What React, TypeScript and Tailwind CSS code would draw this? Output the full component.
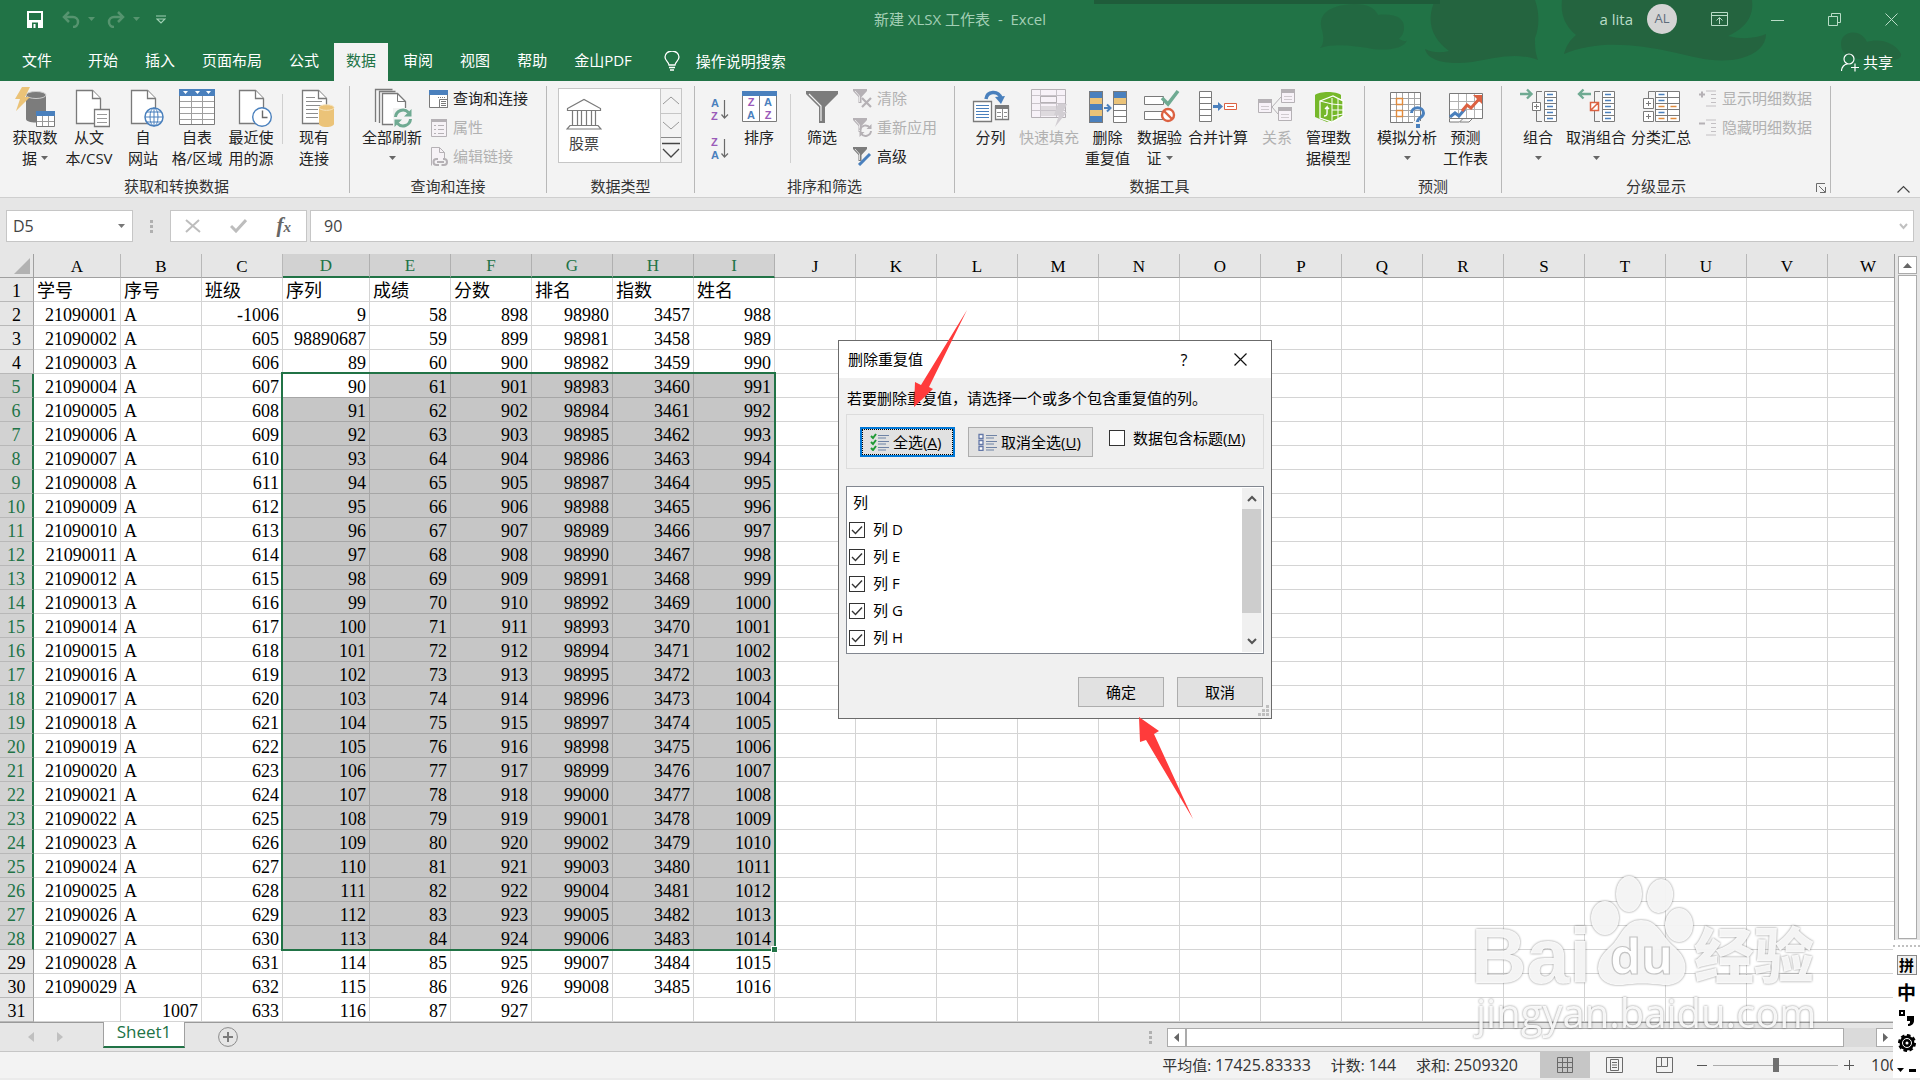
import React from 'react';

const UI_FONT = "font-['Open_Sans','Noto_Sans_CJK_SC',sans-serif]";
const CELL_FONT = "font-['Liberation_Serif','Noto_Sans_CJK_SC',serif]";

const GRAY = '#7a7a7a';
const BLUE = '#4a80bd';
const SAND = '#ebc378';
const GREEN = '#6faa92';
const PURPLE = '#9a5ab8';
const MUTED = '#b5b1b5';
const RED = '#dc6141';

/* ---------- icons ---------- */

type SvgProps = { w?: number; h?: number; children: React.ReactNode };

const Svg: React.FC<SvgProps> = ({ w = 42, h = 42, children }) => (
  <svg width={w} height={h} viewBox={`0 0 ${w} ${h}`} fill="none" className="block shrink-0" aria-hidden="true">
    {children}
  </svg>
);

const Page: React.FC<{ x?: number; y?: number }> = ({ x = 9, y = 4 }) => (
  <g stroke={GRAY} strokeWidth="1.3" fill="#fff">
    <path d={`M${x + 0.5} ${y + 0.5}h16l8 8v25h-24z`} />
    <path d={`M${x + 16.5} ${y + 0.5}v8h8`} />
  </g>
);

const GetDataIcon = () => (
  <Svg>
    <path d="M12 9v24c0 2 4 3.500 10 3.500s10-1.500 10-3.500V9z" fill="#7c7c7c" />
    <ellipse cx="22" cy="9" rx="10" ry="3.500" fill="#7c7c7c" stroke="#cfcfcf" />
    <path d="M8 1h8l-5 10h5L2 25l4-12H1z" fill={SAND} />
    <path d="M22.500 26.500h18v14h-18z" fill="#fff" stroke={GRAY} />
    <path d="M22 25h19v5H22z" fill={BLUE} />
    <path d="M23 35.500h17M28.500 30v10M34.500 30v10" stroke="#9a9a9a" />
  </Svg>
);

const CsvIcon = () => (
  <Svg>
    <Page x={8} />
    <path d="M26.500 23.500h15v17h-15z" fill="#fff" stroke={GRAY} strokeWidth="1.300" />
    <path d="M29 28.500h10M29 32.500h10M29 36.500h10" stroke="#9a9a9a" />
  </Svg>
);

const WebIcon = () => (
  <Svg>
    <Page />
    <circle cx="32" cy="31" r="9" fill="#fff" stroke={BLUE} strokeWidth="1.500" />
    <ellipse cx="32" cy="31" rx="4" ry="9" stroke={BLUE} />
    <path d="M32 22v18M23 31h18M25 26h14M25 36h14" stroke={BLUE} />
  </Svg>
);

const TableIcon = () => (
  <Svg>
    <path d="M3.500 8.500h35v30h-35z" fill="#fff" stroke={GRAY} />
    <path d="M3 3h36v7H3z" fill={BLUE} />
    <path d="M7 5h5l-2.500 3zM19 5h5l-2.500 3zM30 5h5l-2.500 3z" fill="#fff" />
    <path d="M4 15.500h34M4 21.500h34M4 27.500h34M4 33.500h34M15.500 10v28M26.500 10v28" stroke="#9f9f9f" />
  </Svg>
);

const RecentIcon = () => (
  <Svg>
    <Page />
    <circle cx="32" cy="31" r="9.300" fill="#fff" stroke={BLUE} strokeWidth="1.400" />
    <path d="M32.500 24.500v7h5" stroke="#6a6a6a" strokeWidth="1.400" />
  </Svg>
);

const ExistingIcon = () => (
  <Svg>
    <Page />
    <path d="M13 11.500h9M13 15.500h16M13 19.500h16M13 23.500h12M13 27.500h12M13 31.500h12" stroke="#8d8d8d" />
    <path d="M26 21v17c0 1.500 3 3 7.500 3s7.500-1.500 7.500-3V21z" fill={SAND} />
    <ellipse cx="33.500" cy="21.500" rx="7.500" ry="2.800" fill={SAND} stroke="#f6e3bd" />
  </Svg>
);

const RefreshArrows: React.FC<{ x: number; y: number; color: string }> = ({ x, y, color }) => (
  <g transform={`translate(${x} ${y})`}>
    <path d="M1.500 8a7.500 7.500 0 0 1 13-4.500M16.500 10a7.500 7.500 0 0 1-13 4.500" stroke={color} strokeWidth="3" />
    <path d="M17.500 0v7.500h-7.500zM.500 18v-7.500H8z" fill={color} />
  </g>
);

const RefreshAllIcon = () => (
  <Svg>
    <path d="M4.500 36V3.500h17M8.500 37V5.500h16" stroke={GRAY} strokeWidth="1.300" />
    <path d="M11.500 7.500h15l8 8v23h-23z" fill="#fff" stroke={GRAY} strokeWidth="1.300" />
    <path d="M26.500 7.500v8h8" stroke={GRAY} />
    <path d="M22 22h19v20H22z" fill="#f3f3f3" />
    <RefreshArrows x={23} y={23} color={GREEN} />
  </Svg>
);

const QueriesIcon = () => (
  <Svg w={19} h={18}>
    <path d="M.500 1.500h18v16H.500z" fill="#fff" stroke={GRAY} />
    <path d="M0 0h19v5H0z" fill={BLUE} />
    <path d="M9 7.500h8" stroke={GRAY} strokeDasharray="1 1" />
    <path d="M10.500 9.500h8v8h-8zM12 11.500h5M12 13.500h5M12 15.500h5" stroke={GRAY} />
  </Svg>
);

const PropsIcon = () => (
  <Svg w={19} h={18}>
    <path d="M2.500.500h15v17h-15z" fill="#f6f2f6" stroke={MUTED} />
    <path d="M2 0h16v3H2z" fill={MUTED} />
    <path d="M5 6.500h2M5 10.500h2M5 14.500h2M9 6.500h6M9 10.500h6M9 14.500h6" stroke={MUTED} />
  </Svg>
);

const LinksIcon = () => (
  <Svg w={19} h={20}>
    <path d="M2.500 18.500V.500h8l5 5v6" stroke={MUTED} fill="#f6f2f6" />
    <path d="M10.500.500v5h5" stroke={MUTED} />
    <path d="M9 12h-1.500a3 3 0 0 0 0 6H10M14 12h1a3 3 0 0 1 0 6h-2.500M8 15h7" stroke={MUTED} strokeWidth="2" />
  </Svg>
);

const BankIcon = () => (
  <Svg w={36} h={32}>
    <path d="M1.500 10.500L18 1.500l16.500 9v2h-33zM6.500 13v14M11.500 13v14M15.500 13v14M20.500 13v14M25.500 13v14M29.500 13v14M4 27.500h28l3 3.500H1z" stroke={GRAY} strokeWidth="1.200" />
  </Svg>
);

const SortPairIcon: React.FC<{ top: string; bottom: string; topColor: string; bottomColor: string }> = ({
  top,
  bottom,
  topColor,
  bottomColor,
}) => (
  <Svg w={18} h={26}>
    <g fontSize="11" fontWeight="700" fontFamily="Liberation Sans, sans-serif">
      <text x="0" y="10" fill={topColor}>{top}</text>
      <text x="0" y="23" fill={bottomColor}>{bottom}</text>
    </g>
    <path d="M13.500 3v18M10.500 17.500l3 3.500 3.500-3.500" stroke="#6a6a6a" strokeWidth="1.200" />
  </Svg>
);

const SortIcon = () => (
  <Svg>
    <path d="M4.500 6.500h34v29h-34z" fill="#fff" stroke={GRAY} />
    <path d="M4 5h35v5H4z" fill={BLUE} />
    <path d="M21.500 10v25" stroke={GRAY} />
    <g fontSize="11" fontWeight="700" fontFamily="Liberation Sans, sans-serif" textAnchor="middle">
      <text x="13" y="20" fill={PURPLE}>Z</text>
      <text x="13" y="33" fill={BLUE}>A</text>
      <text x="30" y="20" fill={BLUE}>A</text>
      <text x="30" y="33" fill={PURPLE}>Z</text>
    </g>
  </Svg>
);

const FilterIcon = () => (
  <Svg>
    <path d="M5 5h32v3L24 21v16h-6V21L5 8z" fill="#7c7c7c" />
    <path d="M8 8l12 12v15" stroke="#f3f3f3" strokeWidth="1.200" />
  </Svg>
);

const SmallFunnel: React.FC<{ color: string; children?: React.ReactNode }> = ({ color, children }) => (
  <Svg w={19} h={19}>
    <path d="M0 0h14v2L8.500 8v6h-3V8L0 2z" fill={color} />
    <path d="M2 2l4.500 5v6" stroke="#f3f3f3" strokeWidth=".8" />
    {children}
  </Svg>
);

const TextToColumnsIcon = () => (
  <Svg>
    <path d="M3.500 15.500h18v20h-18zM25.500 20.500h13v13h-13z" fill="#fff" stroke={GRAY} strokeWidth="1.300" />
    <path d="M25 19h14v4H25z" fill={GRAY} />
    <path d="M6 19.500h13M6 22.500h13M6 25.500h13M6 28.500h13M6 31.500h13" stroke={BLUE} />
    <path d="M27 26.500h4M34 26.500h3M27 30.500h4M34 30.500h3M32.500 23v10" stroke="#8d8d8d" />
    <path d="M16 13c1-8 12-9 15-1" stroke={BLUE} strokeWidth="3.500" />
    <path d="M25 11l6 7 4-8z" fill={BLUE} />
  </Svg>
);

const FlashFillIcon = () => (
  <Svg>
    <path d="M3.500 3.500h34v28h-34z" fill="#f7f2f8" stroke={MUTED} />
    <path d="M12 20h20v10H12z" fill="#dedade" />
    <path d="M4 9.500h33M4 17.500h33M4 24.500h33M12.500 4v27M28.500 4v27" stroke="#c9c4ca" />
    <path d="M12.500 10.500h16v6h-16z" stroke={MUTED} />
    <path d="M30 18h9l-4 8h4L27 41l4-12h-5z" fill="#d2ced3" />
  </Svg>
);

const RemoveDuplicatesIcon = () => (
  <Svg>
    <path d="M2 5h14v32H2zM26 5h14v32H26z" fill="#fff" />
    <path d="M2 5h14v7H2zM2 18h14v6H2zM2 30h14v7H2zM26 5h14v7H26z" fill={BLUE} />
    <path d="M2 12h14v6H2zM2 24h14v6H2zM26 12h14v6H26z" fill={SAND} />
    <path d="M2.500 5.500h13v31h-13zM26.500 5.500h13v31h-13zM26 18.500h14M26 24.500h14M26 30.500h14" stroke={GRAY} />
    <path d="M17 22h5M20 18.500l3.500 3.500-3.500 3.500" stroke={BLUE} strokeWidth="2" />
  </Svg>
);

const ValidationIcon = () => (
  <Svg>
    <path d="M5.500 10.500h19v8h-19zM5.500 25.500h19v8h-19z" fill="#fff" stroke={GRAY} />
    <path d="M23 12l6 6L39 5" stroke={GREEN} strokeWidth="3.500" />
    <circle cx="29" cy="29" r="6" stroke={RED} strokeWidth="2.400" fill="#fff" />
    <path d="M25 25l8 8" stroke={RED} strokeWidth="2.400" />
  </Svg>
);

const ConsolidateIcon = () => (
  <Svg>
    <path d="M2.500 5.500h12v30h-12zM2.500 11.500h12M2.500 17.500h12M2.500 23.500h12M2.500 29.500h12" fill="#fff" stroke={GRAY} />
    <path d="M16 19h5v-3l5 4.500-5 4.500v-3h-5z" fill={BLUE} />
    <path d="M27.500 17.500h12v6h-12zM30 20.500h7" fill="#fff" stroke={RED} />
  </Svg>
);

const RelationsIcon = () => (
  <Svg>
    <path d="M16 21l9-10M16 21l6 7" stroke={MUTED} />
    <path d="M2.500 13.500h13v13h-13zM25.500 4.500h13v12h-13zM22.500 22.500h13v12h-13z" fill="#f7f2f8" stroke={MUTED} />
    <path d="M2 13h14v4H2zM25 3h14v4H25zM22 21h14v4H22z" fill={MUTED} />
    <path d="M5 20.500h8M5 23.500h8M28 10.500h8M28 13.500h8M25 28.500h8M25 31.500h8" stroke="#cfcacf" />
  </Svg>
);

const DataModelIcon = () => (
  <Svg>
    <path d="M7 9c4-4 22-4 26 0v22l-14 5-12-5z" fill="#76b82a" />
    <path d="M12 15l13-5 10 5v15l-11 6-12-4z" fill="#76b82a" stroke="#fff" strokeWidth="1.300" />
    <path d="M24 12v23M30 13v20M24 18l11 1M24 24h11M24 30l11-2M12 15l12 3" stroke="#fff" />
    <path d="M16 30c4 0 3-2 3-9l-2 2m2-2l2 2" stroke="#fff" strokeWidth="1.400" />
  </Svg>
);

const WhatIfIcon = () => (
  <Svg>
    <path d="M4.500 6.500h30v30h-30z" fill="#fff" stroke={GRAY} />
    <path d="M5 12.500h29M5 18.500h29M5 24.500h29M5 30.500h29M10.500 7v29M16.500 7v29M22.500 7v29M28.500 7v29" stroke="#a6a6a6" />
    <path d="M10.500 12.500h6v6h-6zM10.500 24.500h6v6h-6z" fill="#fff" stroke="#e08a3c" strokeWidth="1.400" />
    <path d="M27 35h9v6h-9z" fill="#f3f3f3" />
    <path d="M25.500 27c0-7 12-7 12 0 0 5-6 4-6 9" stroke={BLUE} strokeWidth="3" />
    <path d="M30 38h4v4h-4z" fill={BLUE} />
  </Svg>
);

const ForecastIcon = () => (
  <Svg>
    <path d="M4.500 7.500h33v25h-33z" fill="#fff" stroke={GRAY} />
    <path d="M5 15.500h32M5 23.500h32M13.500 8v24M21.500 8v24M29.500 8v24" stroke="#b2b2b2" />
    <path d="M4.500 33v3h10l3-3M15 36h9l3-3" stroke={GRAY} fill="#fff" />
    <path d="M5 31l5-4 4 3 6-7" stroke={BLUE} strokeWidth="3" />
    <path d="M17 25l5-6 4 3 9-10" stroke={RED} strokeWidth="3" />
    <path d="M28 9h9v9z" fill={RED} />
  </Svg>
);

const OutlineRows: React.FC<{ x: number }> = ({ x }) => (
  <g>
    <path d={`M${x + 0.5} 5.500h12v30h-12zM${x} 11.500h13M${x} 17.500h13M${x} 23.500h13M${x} 29.500h13`} fill="#fff" stroke={GRAY} />
    <path d={`M${x + 3} 8.500h6M${x + 3} 14.500h6M${x + 3} 20.500h6M${x + 3} 26.500h6M${x + 3} 32.500h6`} stroke={BLUE} strokeWidth="1.400" />
  </g>
);

const GroupIcon = () => (
  <Svg>
    <path d="M3 8h11M10 3.500L14.500 8 10 12.500" stroke={GREEN} strokeWidth="2.400" />
    <path d="M25 5.500h-5.500v30H25" stroke={GRAY} />
    <path d="M15.500 16.500h8v8h-8zM17 20.500h5M19.500 18v5" stroke={GRAY} fill="#fff" />
    <OutlineRows x={27} />
  </Svg>
);

const UngroupIcon = () => (
  <Svg>
    <path d="M16 8H4M8.500 3.500L4 8l4.500 4.500" stroke={GREEN} strokeWidth="2.400" />
    <path d="M25 5.500h-5.500v30H25" stroke={GRAY} />
    <path d="M15.500 16.500h8v8h-8zM16 24l7-7" stroke={RED} strokeWidth="1.500" fill="#fff" />
    <OutlineRows x={27} />
  </Svg>
);

const SubtotalIcon = () => (
  <Svg>
    <path d="M15.500 5.500h24v30h-24zM15 11.500h25M15 17.500h25M15 23.500h25M15 29.500h25M27.500 5v31" fill="#fff" stroke={GRAY} />
    <path d="M18.500 8.500h6M18.500 14.500h6M18.500 26.500h6" stroke={BLUE} strokeWidth="1.400" />
    <path d="M18.500 20.500h6M30.500 20.500h6M18.500 32.500h6M30.500 32.500h6" stroke="#e08a3c" strokeWidth="1.400" />
    <path d="M15 5.500H8.500V12" stroke={GRAY} />
    <path d="M3.500 12.500h10v10h-10zM3.500 25.500h10v10h-10zM6 17.500h5M8.500 15v5M6 30.500h5M8.500 28v5" stroke={GRAY} fill="#fff" />
  </Svg>
);

const DetailIcon: React.FC<{ plus?: boolean }> = ({ plus }) => (
  <Svg w={18} h={17}>
    <path d="M0 4.500h6" stroke={MUTED} strokeWidth="2" />
    {plus && <path d="M3 1.500v6" stroke={MUTED} strokeWidth="2" />}
    <path d="M7 1h10M12 4.500h5M12 8.500h5M12 12.500h5M7 16h10" stroke="#c3c0c3" />
  </Svg>
);

const Caret: React.FC<{ className?: string }> = ({ className = '' }) => (
  <svg width="7" height="4" viewBox="0 0 7 4" className={`inline-block ${className}`} aria-hidden="true">
    <path d="M0 0h7L3.500 4z" fill="currentColor" />
  </svg>
);

/* ---------- title bar and tabs ---------- */

const TitleArt = () => (
  <svg className="pointer-events-none absolute right-0 top-0" width="620" height="81" viewBox="0 0 620 81" aria-hidden="true">
    <g fill="#24643f">
      <path d="M20 48C24 44 24 38 22 30 18 16 26 8 44 5c16-3 30 0 34 10 18-2 26 4 26 12 0 6-2 9-5 12 4 2 7 3 8 1-2 8-18 11-34 9-18-3-38-6-53-1z" opacity=".7" />
      <path d="M125 49c8 4 16 4 24 2-16-12-24-28-14-51h100c5 14 4 28 0 38 0 8 0 14 3 22-22-8-42-2-66 2-22 3-44 0-47-13z" />
      <path d="M264 54c2-8 6-14 12-19-10-8-16-20-14-35h190c2 16-6 28-24 36 16 4 28 2 38-2 0 12-10 20-24 24-24 6-44 0-70-6-36-8-76-12-108 2z" />
      <path d="M541 44c0-14 20-16 26-2 12-4 28 0 34 12 2 8-20 8-34 6-18-2-26-6-26-16z" opacity=".8" />
    </g>
  </svg>
);

const TitleBar = () => (
  <header className="relative bg-[#217346] text-[15px] text-white">
    <TitleArt />
    <div className="absolute left-[57%] top-0 h-1 w-[18%] bg-[#1f5c3a]" />
    <div className="relative grid h-[43px] grid-cols-3 items-center pb-[5px]">
      <div className="flex items-center pl-[27px]">
        <button type="button" aria-label="保存">
          <Svg w={16} h={17}>
            <path d="M1 1h14v15H1z" stroke="#fff" strokeWidth="2" />
            <path d="M2 9h12v7H2z" fill="#fff" />
            <path d="M5 11.500h6V17H5z" fill="#217346" />
            <path d="M6.500 13h2v4h-2z" fill="#fff" />
          </Svg>
        </button>
        <button type="button" aria-label="撤消" className="ml-[19px] flex items-center gap-2 text-[#56946f]">
          <Svg w={18} h={17}>
            <path d="M3 6h8a5 5 0 0 1 0 10" stroke="#56946f" strokeWidth="2.500" />
            <path d="M7 1L2 6l5 5" stroke="#56946f" strokeWidth="2.500" />
          </Svg>
          <Caret />
        </button>
        <button type="button" aria-label="恢复" className="ml-3 flex items-center gap-2 text-[#56946f]">
          <Svg w={18} h={17}>
            <path d="M15 6H7a5 5 0 0 0 0 10" stroke="#56946f" strokeWidth="2.500" />
            <path d="M11 1l5 5-5 5" stroke="#56946f" strokeWidth="2.500" />
          </Svg>
          <Caret />
        </button>
        <button type="button" aria-label="自定义快速访问工具栏" className="ml-4">
          <Svg w={10} h={9}>
            <path d="M0 1h10M1 4l4 4 4-4z" stroke="#9fd0b3" strokeWidth="1.200" />
          </Svg>
        </button>
      </div>
      <h1 className="whitespace-pre text-center text-[#a3cfb5]">新建 XLSX 工作表  -  Excel</h1>
      <div className="flex items-center justify-end pr-[22px] text-[#b9dcc7]">
        <span>a lita</span>
        <span className="ml-[14px] flex h-[30px] w-[30px] items-center justify-center rounded-full bg-[#d4d4d4] text-[13px] text-[#5c6b7a]">
          AL
        </span>
        <button type="button" aria-label="功能区显示选项" className="ml-[34px]">
          <Svg w={17} h={14}>
            <path d="M.500.500h16v13H.500zM.500 3.500h16M8.500 12V6M5.500 8.500l3-3 3 3" stroke="#b9dcc7" />
          </Svg>
        </button>
        <button type="button" aria-label="最小化" className="ml-[43px]">
          <Svg w={13} h={13}><path d="M0 7.500h13" stroke="#b9dcc7" /></Svg>
        </button>
        <button type="button" aria-label="向下还原" className="ml-[44px]">
          <Svg w={14} h={13}>
            <path d="M.500 3.500h9v9h-9zM3.500 3V.500h9v9H10" stroke="#b9dcc7" />
          </Svg>
        </button>
        <button type="button" aria-label="关闭" className="ml-[43px]">
          <Svg w={13} h={13}><path d="M.500.500l12 12M12.500.500l-12 12" stroke="#b9dcc7" /></Svg>
        </button>
      </div>
    </div>
    <nav className="relative flex h-[38px] items-stretch gap-[3px]">
      <a href="#file" className="flex items-center pb-[3px] pl-[22px] pr-[21px]">文件</a>
      {TABS.map((tab) => (
        <a
          key={tab}
          href={`#${tab}`}
          className={`flex items-center px-3 pb-[3px] ${tab === '数据' ? 'bg-[#f3f3f3] text-[#217346]' : ''}`}
        >
          {tab}
        </a>
      ))}
      <button type="button" className="ml-[17px] flex items-center gap-4 pb-[2px]">
        <Svg w={16} h={20}>
          <path d="M5 14c0-3-4-4-4-8a7 6 0 0 1 14 0c0 4-4 5-4 8zM5 16.500h6M6 19h4" stroke="#fff" strokeWidth="1.300" />
        </Svg>
        操作说明搜索
      </button>
      <button type="button" className="ml-auto flex items-center gap-1 pr-[27px]">
        <Svg w={18} h={19}>
          <circle cx="8" cy="6" r="5" stroke="#fff" strokeWidth="1.200" />
          <path d="M.500 18c0-4 3-7 6-7M10 14.500h8M14 10.500v8" stroke="#fff" strokeWidth="1.200" />
        </Svg>
        共享
      </button>
    </nav>
  </header>
);

const TABS = ['开始', '插入', '页面布局', '公式', '数据', '审阅', '视图', '帮助', '金山PDF'];

/* ---------- ribbon ---------- */

type BigButtonProps = {
  icon: React.ReactNode;
  lines: string[];
  width: string;
  caret?: boolean;
  disabled?: boolean;
};

const BigButton: React.FC<BigButtonProps> = ({ icon, lines, width, caret, disabled }) => (
  <button
    type="button"
    disabled={disabled}
    className={`flex shrink-0 flex-col items-center whitespace-nowrap leading-[19px] ${width} ${disabled ? 'text-[#b1b1b1]' : ''}`}
  >
    {icon}
    <span className="h-5">{lines[0]}</span>
    <span className="flex h-5 items-center">
      {lines[1]}
      {caret && <Caret className={`text-[#666] ${lines[1] ? 'ml-1' : ''}`} />}
    </span>
  </button>
);

const SmallButton: React.FC<{ icon: React.ReactNode; label: string; disabled?: boolean }> = ({ icon, label, disabled }) => (
  <button
    type="button"
    disabled={disabled}
    className={`flex h-[29px] items-center gap-[5px] whitespace-nowrap pb-1 ${disabled ? 'text-[#b1b1b1]' : ''}`}
  >
    {icon}
    {label}
  </button>
);

type GroupProps = { label: string; width: string; children: React.ReactNode; launcher?: boolean };

const RibbonGroup: React.FC<GroupProps> = ({ label, width, children, launcher }) => (
  <section className={`relative mb-1 mt-[5px] flex shrink-0 flex-col border-r border-[#b8b8b8] ${width}`}>
    <div className="flex flex-1">{children}</div>
    <h2 className={`-mb-[3px] text-center leading-[19px] text-[#333] ${launcher ? 'pr-5' : ''}`}>{label}</h2>
    {launcher && (
      <button type="button" aria-label="分级显示设置" className="absolute bottom-0 right-1">
        <Svg w={10} h={10}>
          <path d="M.500 9V.500H9M3 3l6 6M9.500 4v5.500H4" stroke="#6a6a6a" />
        </Svg>
      </button>
    )}
  </section>
);

const Divider: React.FC<{ className: string }> = ({ className }) => (
  <div className={`mt-2 w-px shrink-0 bg-[#d0d0d0] ${className}`} />
);

const Ribbon = () => (
  <div className="flex h-[117px] border-b border-[#cfcfcf] bg-[#f3f3f3] text-[15px] text-[#222]">
    <RibbonGroup label="获取和转换数据" width="w-[350px] pr-1 pl-2">
      <BigButton icon={<GetDataIcon />} lines={['获取数', '据']} caret width="w-[54px]" />
      <BigButton icon={<CsvIcon />} lines={['从文', '本/CSV']} width="w-[54px]" />
      <BigButton icon={<WebIcon />} lines={['自', '网站']} width="w-[54px]" />
      <BigButton icon={<TableIcon />} lines={['自表', '格/区域']} width="w-[54px]" />
      <BigButton icon={<RecentIcon />} lines={['最近使', '用的源']} width="w-[54px]" />
      <Divider className="mx-1 h-[50px]" />
      <BigButton icon={<ExistingIcon />} lines={['现有', '连接']} width="w-[54px]" />
    </RibbonGroup>
    <RibbonGroup label="查询和连接" width="w-[197px]">
      <BigButton icon={<RefreshAllIcon />} lines={['全部刷新']} caret width="ml-2 w-[68px]" />
      <div className="ml-[3px]">
        <SmallButton icon={<QueriesIcon />} label="查询和连接" />
        <SmallButton icon={<PropsIcon />} label="属性" disabled />
        <SmallButton icon={<LinksIcon />} label="编辑链接" disabled />
      </div>
    </RibbonGroup>
    <RibbonGroup label="数据类型" width="w-[148px]">
      <div className="ml-[11px] mt-[2px] flex h-[75px] w-[124px] border border-[#c6c6c6] bg-white">
        <button type="button" className="flex flex-1 flex-col items-start pl-[7px] pt-[9px] text-[#444]">
          <BankIcon />
          <span className="ml-[3px] mt-1 leading-[19px]">股票</span>
        </button>
        <div className="flex w-[21px] flex-col border-l border-[#c6c6c6] bg-[#f3f3f3]">
          <button type="button" aria-label="上一行" className="flex flex-1 items-center justify-center border-b border-[#c6c6c6]">
            <Svg w={18} h={9}><path d="M1 8l8-7 8 7" stroke="#999" /></Svg>
          </button>
          <button type="button" aria-label="下一行" className="flex flex-1 items-center justify-center border-b border-[#8a8a8a]">
            <Svg w={18} h={9}><path d="M1 1l8 7 8-7" stroke="#999" /></Svg>
          </button>
          <button type="button" aria-label="其他" className="flex flex-1 items-center justify-center">
            <Svg w={18} h={18}><path d="M0 2.500h18M1 8l8 8 8-8" stroke="#444" strokeWidth="1.300" /></Svg>
          </button>
        </div>
      </div>
    </RibbonGroup>
    <RibbonGroup label="排序和筛选" width="w-[260px]">
      <div className="ml-4 flex w-6 flex-col gap-[13px] pt-[11px]">
        <button type="button" aria-label="升序">
          <SortPairIcon top="A" bottom="Z" topColor={BLUE} bottomColor={PURPLE} />
        </button>
        <button type="button" aria-label="降序">
          <SortPairIcon top="Z" bottom="A" topColor={PURPLE} bottomColor={BLUE} />
        </button>
      </div>
      <BigButton icon={<SortIcon />} lines={['排序']} width="w-12" />
      <Divider className="mx-[7px] h-[69px]" />
      <BigButton icon={<FilterIcon />} lines={['筛选']} width="w-12" />
      <div className="ml-[7px]">
        <SmallButton
          disabled
          label="清除"
          icon={<SmallFunnel color={MUTED}><path d="M9 9l9 9M18 9l-9 9" stroke={MUTED} strokeWidth="2.200" /></SmallFunnel>}
        />
        <SmallButton
          disabled
          label="重新应用"
          icon={
            <SmallFunnel color={MUTED}>
              <path d="M7 12a5.500 5.500 0 0 1 10-2M18 13a5.500 5.500 0 0 1-10 2.500" stroke={MUTED} strokeWidth="2" />
              <path d="M18.500 6v5h-5zM6.500 19v-5h5z" fill={MUTED} />
            </SmallFunnel>
          }
        />
        <SmallButton
          label="高级"
          icon={<SmallFunnel color="#7c7c7c"><path d="M6 18l11-11" stroke={BLUE} strokeWidth="3" /></SmallFunnel>}
        />
      </div>
    </RibbonGroup>
    <RibbonGroup label="数据工具" width="w-[410px]">
      <BigButton icon={<TextToColumnsIcon />} lines={['分列']} width="ml-[7px] w-[57px]" />
      <BigButton icon={<FlashFillIcon />} lines={['快速填充']} width="w-[60px]" disabled />
      <BigButton icon={<RemoveDuplicatesIcon />} lines={['删除', '重复值']} width="w-[57px]" />
      <BigButton icon={<ValidationIcon />} lines={['数据验', '证']} caret width="w-[47px]" />
      <BigButton icon={<ConsolidateIcon />} lines={['合并计算']} width="w-[70px]" />
      <BigButton icon={<RelationsIcon />} lines={['关系']} width="w-12" disabled />
      <BigButton icon={<DataModelIcon />} lines={['管理数', '据模型']} width="w-[55px]" />
    </RibbonGroup>
    <RibbonGroup label="预测" width="w-[137px]">
      <BigButton icon={<WhatIfIcon />} lines={['模拟分析']} caret width="ml-[10px] w-16" />
      <BigButton icon={<ForecastIcon />} lines={['预测', '工作表']} width="w-[53px]" />
    </RibbonGroup>
    <RibbonGroup label="分级显示" width="w-[329px]" launcher>
      <BigButton icon={<GroupIcon />} lines={['组合']} caret width="ml-2 w-14" />
      <BigButton icon={<UngroupIcon />} lines={['取消组合']} caret width="w-[60px]" />
      <BigButton icon={<SubtotalIcon />} lines={['分类汇总']} width="w-[70px]" />
      <div className="ml-[3px]">
        <SmallButton icon={<DetailIcon plus />} label="显示明细数据" disabled />
        <SmallButton icon={<DetailIcon />} label="隐藏明细数据" disabled />
      </div>
    </RibbonGroup>
    <button type="button" aria-label="折叠功能区" className="ml-auto self-end pb-1 pr-[10px]">
      <Svg w={13} h={8}><path d="M.500 7.500l6-6 6 6" stroke="#444" strokeWidth="1.200" /></Svg>
    </button>
  </div>
);

/* ---------- formula bar ---------- */

const Dots = () => (
  <Svg w={3} h={13}><path d="M0 0h3v3H0zM0 5h3v3H0zM0 10h3v3H0z" fill="#b0b0b0" /></Svg>
);

const FormulaBar = () => (
  <div className="flex h-14 items-start bg-[#e6e6e6] pl-[6px] pr-[6px] pt-3 text-[16px] text-[#444]">
    <div className="flex h-8 w-[127px] items-center border border-[#c6c6c6] bg-white pr-[7px]">
      <input aria-label="名称框" defaultValue="D5" className="min-w-0 flex-1 bg-transparent pl-[6px] outline-none" />
      <Caret className="text-[#777]" />
    </div>
    <div className="flex h-8 w-[37px] items-center justify-center"><Dots /></div>
    <div className="flex h-8 w-[137px] items-center justify-between border border-[#c6c6c6] bg-white pl-[14px] pr-[15px]">
      <button type="button" aria-label="取消输入">
        <Svg w={16} h={14}><path d="M1 1l14 12M14 1L1 13" stroke="#bdbdbd" strokeWidth="2" /></Svg>
      </button>
      <button type="button" aria-label="输入">
        <Svg w={17} h={14}><path d="M1 7l5 5L16 1" stroke="#bdbdbd" strokeWidth="3" /></Svg>
      </button>
      <button type="button" aria-label="插入函数" className="font-['Liberation_Serif',serif] text-[21px] font-bold italic leading-6 text-[#666]">
        f<span className="text-[15px]">x</span>
      </button>
    </div>
    <div className="ml-[3px] flex h-8 flex-1 items-center border border-[#c6c6c6] bg-white pr-[5px]">
      <input aria-label="编辑栏" defaultValue="90" className="min-w-0 flex-1 bg-transparent pl-[13px] outline-none" />
      <Svg w={9} h={7}><path d="M1 1l3.500 4L8 1" stroke="#c0c0c0" strokeWidth="2" /></Svg>
    </div>
  </div>
);

/* ---------- sheet ---------- */

const COLUMNS = 'ABCDEFGHIJKLMNOPQRSTUVW'.split('');
const TITLES = ['学号', '序号', '班级', '序列', '成绩', '分数', '排名', '指数', '姓名'];

const rowValues = (row: number): string[] => {
  if (row === 1) return TITLES;
  if (row === 31) return ['', '1007', '633', '116', '87', '927'];
  const values = [21089999 + row, 'A', 602 + row, 85 + row, 56 + row, 896 + row, 98978 + row, 3455 + row, 986 + row];
  if (row === 2) {
    values[2] = -1006;
    values[3] = 9;
  }
  if (row === 3) values[3] = 98890687;
  return values.map(String);
};

const isPicked = (row: number, col: number) => row >= 5 && row <= 28 && col >= 3 && col <= 8;

const cellClass = (row: number, col: number, value: string) => {
  const align = /\d/.test(value) ? 'text-right' : 'text-left';
  if (row === 5 && col === 3) return `${align} border-[#a6a6a6]`;
  return `${align} ${isPicked(row, col) ? 'border-[#a6a6a6] bg-[#c6c6c6]' : 'border-[#d4d4d4]'}`;
};

const Sheet = () => (
  <div className="relative min-w-0 flex-1 overflow-hidden bg-white">
    <table className={`w-max border-separate border-spacing-0 text-[18px] leading-5 text-black ${CELL_FONT}`}>
      <thead>
        <tr className="h-6 bg-[#e6e6e6]">
          <th aria-label="全选" className="w-[34px] min-w-[34px] border-b border-r border-[#a0a0a0] p-0">
            <svg width="16" height="16" viewBox="0 0 16 16" className="ml-[14px] block" aria-hidden="true">
              <path d="M16 0v16H0z" fill="#b2b2b2" />
            </svg>
          </th>
          {COLUMNS.map((name, col) => (
            <th
              key={name}
              className={`border-r px-0 pb-0 pt-[2px] text-[17px] font-normal ${name === 'A' || name === 'D' ? 'w-[87px] min-w-[87px]' : 'w-[81px] min-w-[81px]'} ${
                col >= 3 && col <= 8
                  ? 'border-b-2 border-b-[#217346] border-r-[#b0b0b0] bg-[#d2d2d2] text-[#217346]'
                  : 'border-b border-b-[#a0a0a0] border-r-[#b8b8b8]'
              }`}
            >
              {name}
            </th>
          ))}
        </tr>
      </thead>
      <tbody>
        {Array.from({ length: 31 }, (_, i) => i + 1).map((row) => {
          const values = rowValues(row);
          return (
            <tr key={row} className="h-6">
              <th
                className={`border-b border-b-[#b8b8b8] px-0 pb-0 pt-[3px] font-normal ${
                  row >= 5 && row <= 28
                    ? 'border-r-2 border-r-[#217346] bg-[#d2d2d2] text-[#217346]'
                    : 'border-r border-r-[#a0a0a0] bg-[#e6e6e6]'
                }`}
              >
                {row}
              </th>
              {COLUMNS.map((name, col) => (
                <td key={name} className={`border-b border-r px-[3px] pb-0 pt-[3px] ${cellClass(row, col, values[col] ?? '')}`}>
                  {values[col]}
                </td>
              ))}
            </tr>
          );
        })}
      </tbody>
    </table>
    <div className="pointer-events-none absolute left-[281px] top-[118px] h-[579px] w-[495px] border-2 border-[#217346]">
      <div className="absolute -bottom-1 -right-1 h-[7px] w-[7px] border border-white bg-[#217346]" />
    </div>
  </div>
);

const VerticalScroll = () => (
  <div className="flex w-[26px] shrink-0 flex-col items-start gap-px border-l border-[#a0a0a0] bg-[#e6e6e6] pl-[3px] pt-[2px]">
    <button type="button" aria-label="向上滚动" className="flex h-[18px] w-[19px] items-center justify-center border border-[#ababab] bg-white">
      <Svg w={9} h={5}><path d="M4.500 0L9 5H0z" fill="#666" /></Svg>
    </button>
    <div className="mb-[83px] w-[19px] flex-1 border border-[#ababab] bg-white" />
  </div>
);

const SheetTabs = () => (
  <div className="flex h-[30px] border-b border-t border-b-[#c6c6c6] border-t-[#9a9a9a] bg-[#e6e6e6]">
    <div className="flex flex-1 items-start">
      <button type="button" aria-label="上一张" className="ml-7 mt-[9px]">
        <Svg w={6} h={10}><path d="M6 0v10L0 5z" fill="#c0c0c0" /></Svg>
      </button>
      <button type="button" aria-label="下一张" className="ml-[23px] mt-[9px]">
        <Svg w={6} h={10}><path d="M0 0v10l6-5z" fill="#c0c0c0" /></Svg>
      </button>
      <button
        type="button"
        className="-mt-px ml-10 h-[26px] w-[82px] border-x border-b-2 border-x-[#a0a0a0] border-b-[#217346] bg-white pb-1 text-[17px] leading-5 text-[#217346]"
      >
        Sheet1
      </button>
      <button type="button" aria-label="新工作表" className="ml-[33px] mt-1">
        <Svg w={20} h={20}>
          <circle cx="10" cy="10" r="9.400" stroke="#8a8a8a" />
          <path d="M5 10h10M10 5v10" stroke="#7c7c7c" strokeWidth="2" />
        </Svg>
      </button>
    </div>
    <div className="flex w-[771px] items-center">
      <Dots />
      <button type="button" aria-label="向左滚动" className="ml-[15px] flex h-[19px] w-[19px] items-center justify-center border border-[#ababab] bg-white">
        <Svg w={5} h={9}><path d="M5 0v9L0 4.500z" fill="#666" /></Svg>
      </button>
      <div className="h-[19px] flex-1 border border-[#ababab] bg-white" />
      <div className="h-[19px] w-8 bg-[#dadada]" />
      <button type="button" aria-label="向右滚动" className="mr-[25px] flex h-[19px] w-[19px] items-center justify-center border border-[#ababab] bg-white">
        <Svg w={5} h={9}><path d="M0 0v9l5-4.500z" fill="#666" /></Svg>
      </button>
    </div>
  </div>
);

const STATS = [
  ['平均值', '17425.83333'],
  ['计数', '144'],
  ['求和', '2509320'],
];

const StatusBar = () => (
  <footer className="flex h-7 items-stretch justify-end overflow-hidden border-b-2 border-[#ebebeb] bg-[#f3f3f3] text-[15px] text-[#333]">
    <div className="mr-[22px] flex items-center gap-5">
      {STATS.map(([label, value]) => (
        <span key={label} className="whitespace-nowrap">
          {label}: <span className="text-[16px]">{value}</span>
        </span>
      ))}
    </div>
    <button type="button" aria-label="普通" className="flex w-[50px] items-center justify-center bg-[#c6c6c6]">
      <Svg w={16} h={16}><path d="M.500.500h15v15H.500zM.500 5.500h15M.500 10.500h15M5.500.500v15M10.500.500v15" stroke="#6a6a6a" /></Svg>
    </button>
    <button type="button" aria-label="页面布局视图" className="flex w-[49px] items-center justify-center">
      <Svg w={17} h={16}><path d="M.500.500h16v15H.500zM4.500 2.500h8v11h-8zM6 5.500h5M6 8h5M6 10.500h5" stroke="#6a6a6a" /></Svg>
    </button>
    <button type="button" aria-label="分页预览" className="flex w-[50px] items-center justify-center">
      <Svg w={17} h={16}><path d="M.500.500h16v15H.500zM5.500.500v9h6v-9M.500 9.500h5" stroke="#6a6a6a" /></Svg>
    </button>
    <button type="button" aria-label="缩小" className="ml-2 w-4 leading-6">
      <Svg w={10} h={10}><path d="M0 5.500h10" stroke="#555" /></Svg>
    </button>
    <div className="relative flex w-[125px] items-center">
      <div className="h-px w-full bg-[#ababab]" />
      <input
        type="range"
        aria-label="缩放"
        defaultValue={50}
        className="absolute inset-0 w-full appearance-none bg-transparent [&::-webkit-slider-thumb]:h-[14px] [&::-webkit-slider-thumb]:w-[6px] [&::-webkit-slider-thumb]:appearance-none [&::-webkit-slider-thumb]:bg-[#707070]"
      />
    </div>
    <button type="button" aria-label="放大" className="ml-[6px] w-[10px]">
      <Svg w={10} h={10}><path d="M0 5.500h10M5.500 0v10" stroke="#555" /></Svg>
    </button>
    <span className="ml-[17px] w-[49px] self-center text-[16px]">100%</span>
  </footer>
);

/* ---------- dialog ---------- */

const CheckBox: React.FC<{ id: string; checked?: boolean }> = ({ id, checked }) => (
  <span className="relative block h-4 w-4 shrink-0">
    <input id={id} type="checkbox" defaultChecked={checked} className="peer block h-4 w-4 appearance-none border border-[#333] bg-white" />
    <svg viewBox="0 0 16 16" className="pointer-events-none absolute inset-0 hidden peer-checked:block" fill="none" aria-hidden="true">
      <path d="M3 8l3.500 3.500L13 4.500" stroke="#333" strokeWidth="1.400" />
    </svg>
  </span>
);

const ListGlyph: React.FC<{ checked?: boolean }> = ({ checked }) => (
  <Svg w={19} h={18}>
    <path d="M8 2.500h11M8 5h8M8 8.500h11M8 11h8M8 14.500h11M8 17h8" stroke="#6f83a6" strokeWidth="1.200" />
    {checked ? (
      <path d="M1 3l2 2 3-4M1 9l2 2 3-4M1 15l2 2 3-4" stroke="#1f9a35" strokeWidth="2" />
    ) : (
      <path d="M1 1.500h4v4H1zM1 7.500h4v4H1zM1 13.500h4v4H1z" stroke="#6478a8" strokeWidth="1.300" fill="#fff" />
    )}
  </Svg>
);

const DIALOG_COLUMNS = ['列 D', '列 E', '列 F', '列 G', '列 H'];

const RemoveDuplicatesDialog = () => (
  <div
    role="dialog"
    aria-labelledby="dialog-title"
    className="absolute left-[838px] top-[340px] w-[434px] border border-[#6b6b6b] bg-[#f0f0f0] text-[15px] text-black"
  >
    <div className="flex h-[37px] items-center bg-white pl-[9px] pr-6">
      <h2 id="dialog-title" className="flex-1">删除重复值</h2>
      <button type="button" aria-label="帮助" className="w-2 text-[16px]">?</button>
      <button type="button" aria-label="关闭" className="ml-[46px]">
        <Svg w={13} h={13}><path d="M.500.500l12 12M12.500.500l-12 12" stroke="#111" strokeWidth="1.200" /></Svg>
      </button>
    </div>
    <div className="px-[7px] pb-[11px]">
      <p className="pl-px pt-[9px] leading-[22px]">若要删除重复值，请选择一个或多个包含重复值的列。</p>
      <div className="mt-[5px] flex h-[55px] items-start border border-[#dcdcdc] pl-[13px] pt-3">
        <button
          type="button"
          className="flex h-[30px] w-[95px] items-center gap-1 border-2 border-[#0078d7] bg-[#e1e1e1] pl-2 outline-1 -outline-offset-3 outline-dotted outline-black"
        >
          <ListGlyph checked />
          <span className="whitespace-nowrap">全选(<u>A</u>)</span>
        </button>
        <button type="button" className="ml-[13px] flex h-[30px] w-[125px] items-center gap-1 border border-[#adadad] bg-[#e1e1e1] pl-[9px]">
          <ListGlyph />
          <span className="whitespace-nowrap">取消全选(<u>U</u>)</span>
        </button>
        <div className="ml-4 flex items-center gap-2">
          <CheckBox id="has-headers" />
          <label htmlFor="has-headers" className="whitespace-nowrap">数据包含标题(<u>M</u>)</label>
        </div>
      </div>
      <div className="mt-[17px] flex h-[168px] border border-[#828790] bg-white">
        <div className="flex-1 pl-[2px] pt-[2px]">
          <div className="h-[27px] pl-1 leading-[27px]">列</div>
          {DIALOG_COLUMNS.map((name) => (
            <div key={name} className="flex h-[27px] items-center gap-2">
              <CheckBox id={name} checked />
              <label htmlFor={name}>{name}</label>
            </div>
          ))}
        </div>
        <div className="my-px mr-px flex w-5 flex-col bg-[#f0f0f0]">
          <button type="button" aria-label="向上" className="flex h-[21px] items-center justify-center">
            <Svg w={10} h={7}><path d="M1 6l4-4 4 4" stroke="#555" strokeWidth="2" /></Svg>
          </button>
          <div className="mr-px flex-1 bg-[#cdcdcd]" />
          <button type="button" aria-label="向下" className="flex h-[39px] items-end justify-center pb-[7px]">
            <Svg w={10} h={7}><path d="M1 1l4 4 4-4" stroke="#555" strokeWidth="2" /></Svg>
          </button>
        </div>
      </div>
      <div className="mt-[23px] flex justify-end gap-[13px] pr-px">
        <button type="button" className="h-[30px] w-[86px] border border-[#adadad] bg-[#e1e1e1]">确定</button>
        <button type="button" className="h-[30px] w-[86px] border border-[#adadad] bg-[#e1e1e1]">取消</button>
      </div>
    </div>
    <svg className="absolute bottom-[2px] right-[2px]" width="11" height="11" viewBox="0 0 11 11" aria-hidden="true">
      <path d="M8 0h3v3H8zM8 4h3v3H8zM8 8h3v3H8zM4 4h3v3H4zM4 8h3v3H4zM0 8h3v3H0z" fill="#bfbfbf" />
    </svg>
  </div>
);

/* ---------- overlays ---------- */

const Arrows = () => (
  <svg className="pointer-events-none absolute left-[900px] top-[300px]" width="300" height="530" viewBox="0 0 300 530" aria-hidden="true">
    <path d="M67 10L21 85l-6-3-1 25 19-18-4-2z" fill="#ff3b3b" />
    <path d="M239 417l20 14-5 3 39 85-47-79-6 2z" fill="#ff3b3b" />
  </svg>
);

const Watermark = () => (
  <svg
    className="pointer-events-none absolute left-[1460px] top-[860px] drop-shadow-[0_0_1px_rgba(0,0,0,0.5)]"
    width="380"
    height="190"
    viewBox="0 0 380 190"
    fill="#fff"
    fillOpacity=".9"
    aria-hidden="true"
  >
    <text x="11" y="123" fontSize="77" fontWeight="700" fontFamily="Liberation Sans, sans-serif">Bai</text>
    <ellipse cx="145" cy="58" rx="14" ry="17" />
    <ellipse cx="169" cy="34" rx="13" ry="18" />
    <ellipse cx="200" cy="36" rx="13" ry="17" transform="rotate(10 200 36)" />
    <ellipse cx="219" cy="65" rx="14" ry="17" />
    <path d="M181 60c16 0 20 14 30 24 12 10 16 18 14 28-2 10-12 14-22 13-14-2-28-2-40 0-14 1-24-4-25-16 0-12 8-18 16-26 8-10 12-23 27-23z" />
    <text x="150" y="114" fontSize="49" fontWeight="700" fontFamily="Open Sans, sans-serif" stroke="#c4c4c4" strokeWidth="1.200">du</text>
    <text x="234" y="118" fontSize="60" fontWeight="900" fontFamily="Noto Sans CJK SC, sans-serif">经验</text>
    <text x="16" y="168" fontSize="40" fontFamily="Open Sans, sans-serif">jingyan.baidu.com</text>
  </svg>
);

const ImePanel = () => (
  <div className="absolute bottom-[2px] right-0 flex h-[138px] w-[27px] flex-col items-center bg-white pt-[5px] font-bold leading-5 text-black">
    <div className="w-full border-t-2 border-dotted border-[#c0c0c0]" />
    <button type="button" className="mt-2 h-5 w-5 border border-[#888] bg-[#f0f0f0] text-[15px] leading-4">拼</button>
    <button type="button" className="mt-2 text-[19px]">中</button>
    <button type="button" aria-label="标点" className="mt-[6px]">
      <Svg w={17} h={17}>
        <path d="M2 2h4v4H2z" stroke="#000" strokeWidth="2" />
        <path d="M9 7h7v5c0 3-3 5-6 5v-2c2 0 2-1 2-3H9z" fill="#000" />
      </Svg>
    </button>
    <button type="button" aria-label="设置" className="mt-2">
      <Svg w={18} h={18}>
        <circle cx="9" cy="9" r="7.500" fill="#000" />
        <circle cx="9" cy="9" r="7.700" stroke="#000" strokeWidth="2.600" strokeDasharray="3.500 2.500" />
        <circle cx="9" cy="9" r="4.500" stroke="#fff" />
        <circle cx="9" cy="9" r="1.500" fill="#fff" />
      </Svg>
    </button>
    <div className="mt-4 flex items-end gap-[5px]">
      <Caret />
      <span className="h-[3px] w-[7px] bg-black" />
    </div>
  </div>
);

export default function App() {
  return (
    <div className={`relative flex h-screen w-full flex-col overflow-hidden bg-[#e6e6e6] ${UI_FONT}`}>
      <TitleBar />
      <Ribbon />
      <FormulaBar />
      <main className="flex min-h-0 flex-1">
        <Sheet />
        <VerticalScroll />
      </main>
      <SheetTabs />
      <StatusBar />
      <RemoveDuplicatesDialog />
      <Arrows />
      <Watermark />
      <ImePanel />
    </div>
  );
}
